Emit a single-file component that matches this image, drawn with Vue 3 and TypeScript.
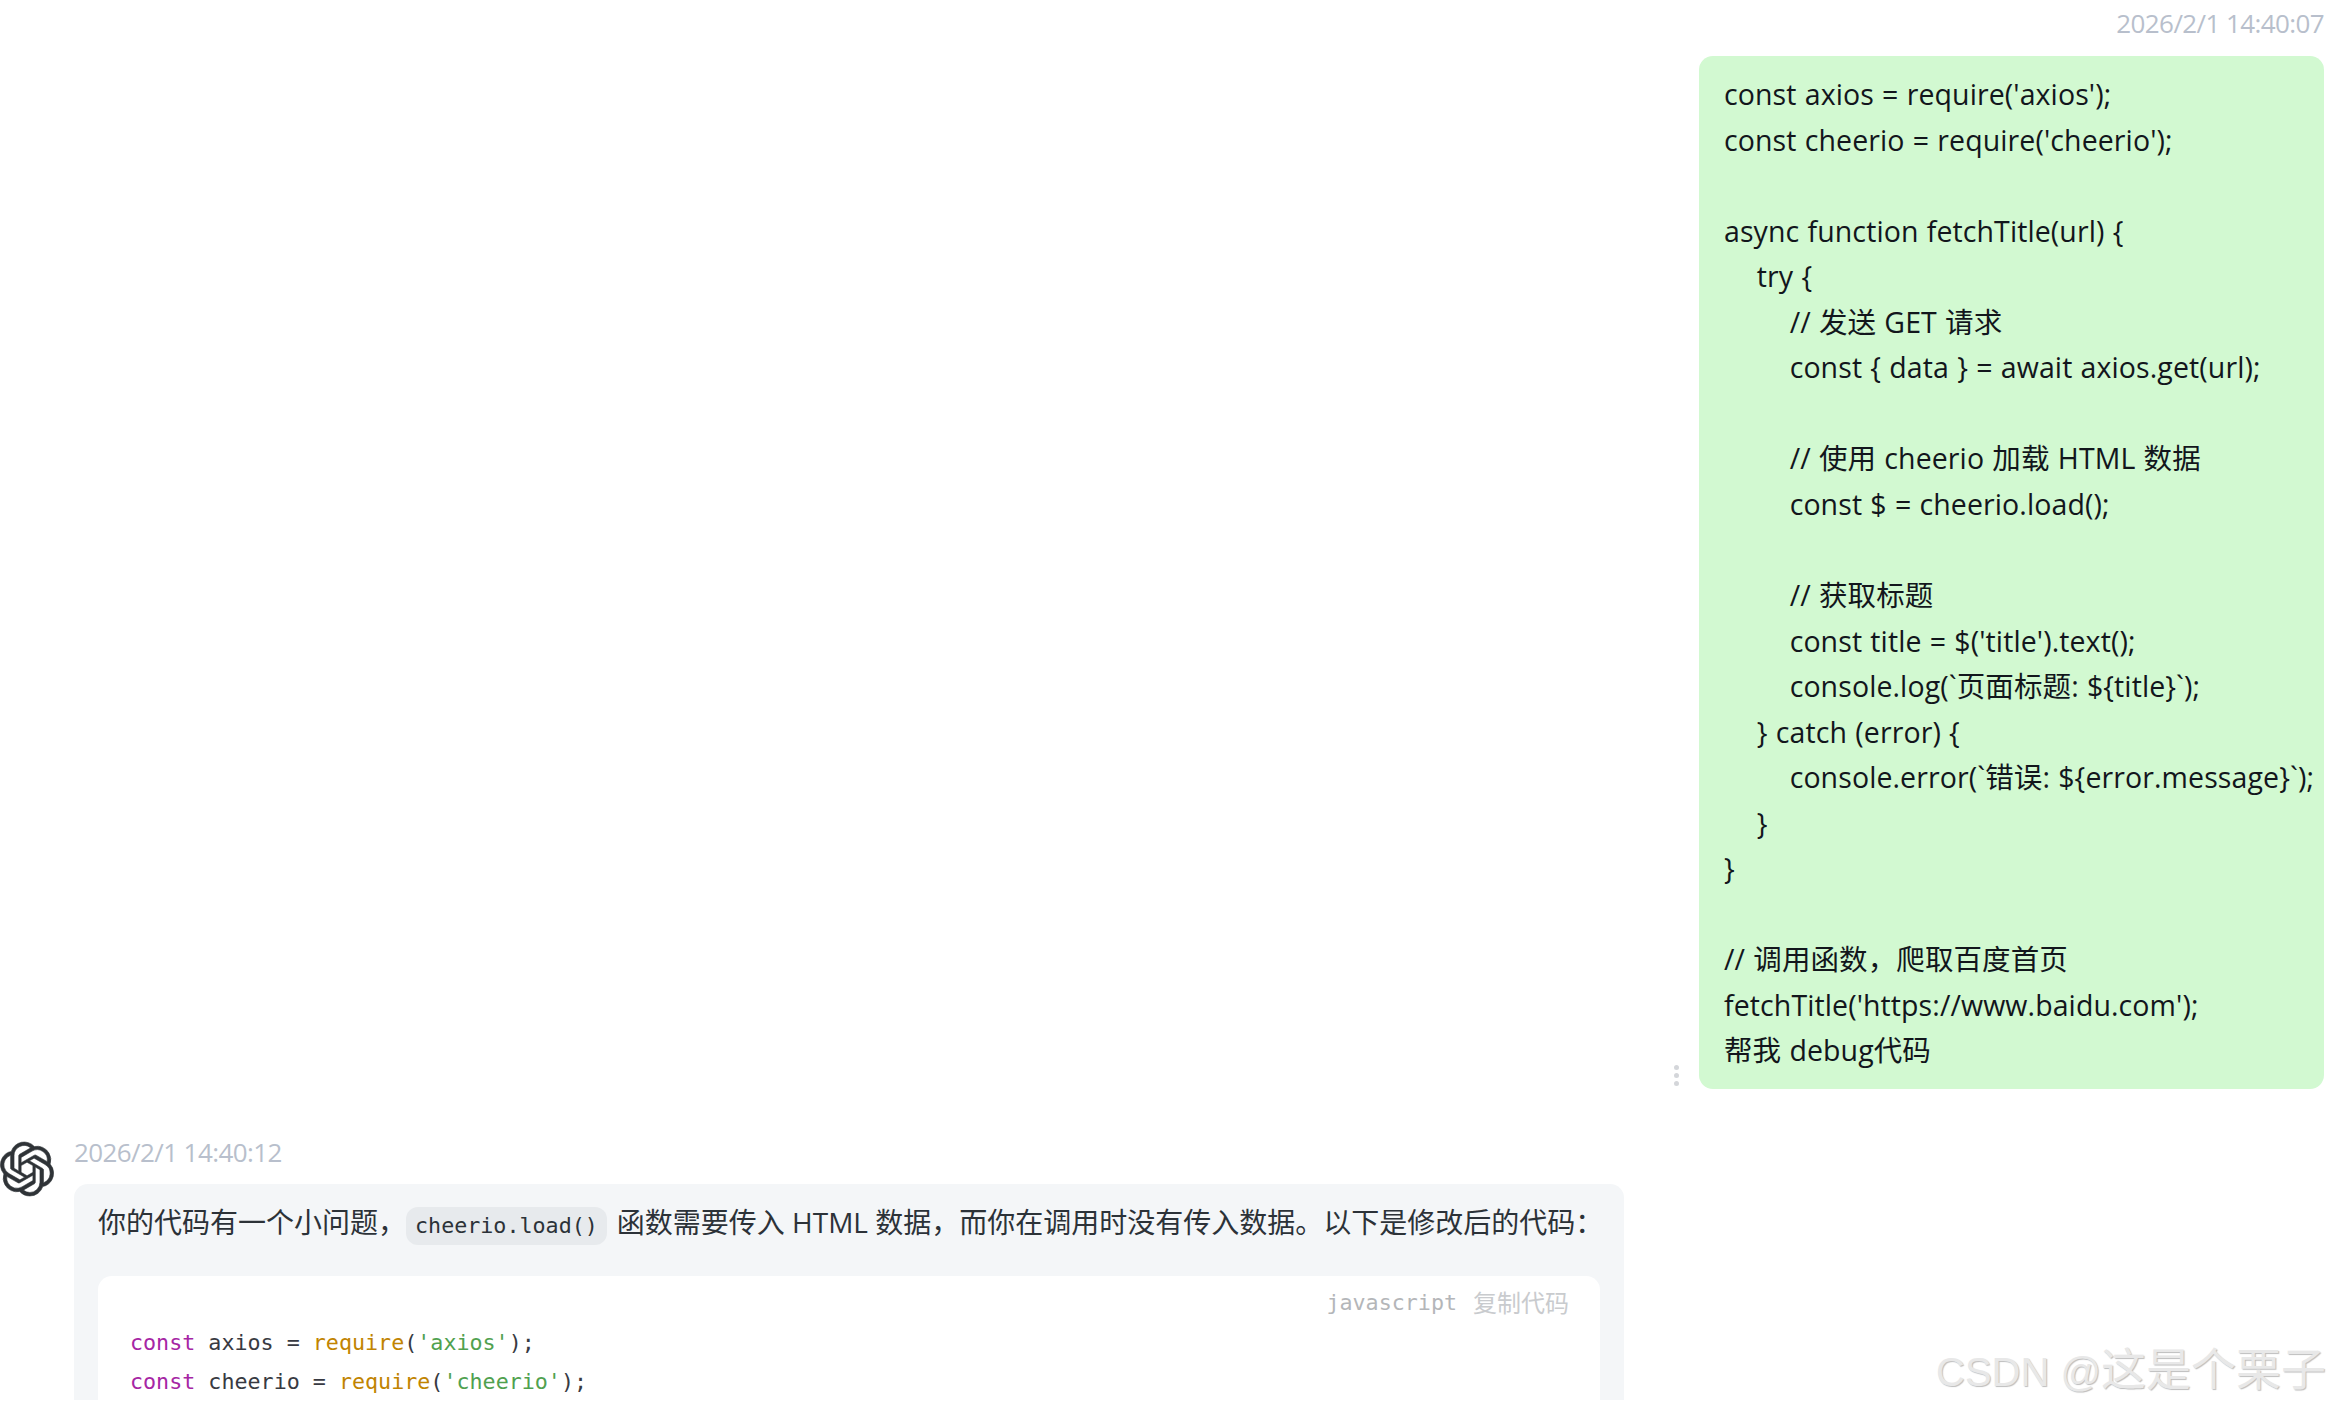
<script setup lang="ts">
const userText = `const axios = require('axios');
const cheerio = require('cheerio');

async function fetchTitle(url) {
    try {
        // 发送 GET 请求
        const { data } = await axios.get(url);

        // 使用 cheerio 加载 HTML 数据
        const $ = cheerio.load();

        // 获取标题
        const title = $('title').text();
        console.log(\`页面标题: \${title}\`);
    } catch (error) {
        console.error(\`错误: \${error.message}\`);
    }
}

// 调用函数，爬取百度首页
fetchTitle('https://www.baidu.com');
帮我 debug代码`
</script>

<template>
  <div class="page">
    <div class="stage">
      <section class="user-row">
        <div class="time user-time">2026/2/1 14:40:07</div>
        <div class="user-line">
          <div class="dots"><i></i><i></i><i></i></div>
          <div class="user-bubble">{{ userText }}</div>
        </div>
      </section>

      <section class="ai-row">
        <svg class="logo" viewBox="0 0 24 24" aria-hidden="true">
          <path fill="#2f3337" stroke="#2f3337" stroke-width="0.25" d="M22.2819 9.8211a5.9847 5.9847 0 0 0-.5157-4.9108 6.0462 6.0462 0 0 0-6.5098-2.9A6.0651 6.0651 0 0 0 4.9807 4.1818a5.9847 5.9847 0 0 0-3.9977 2.9 6.0462 6.0462 0 0 0 .7427 7.0966 5.98 5.98 0 0 0 .511 4.9107 6.051 6.051 0 0 0 6.5146 2.9001A5.9847 5.9847 0 0 0 13.2599 24a6.0557 6.0557 0 0 0 5.7718-4.2058 5.9894 5.9894 0 0 0 3.9977-2.9001 6.0557 6.0557 0 0 0-.7475-7.0729zm-9.022 12.6081a4.4755 4.4755 0 0 1-2.8764-1.0408l.1419-.0804 4.7783-2.7582a.7948.7948 0 0 0 .3927-.6813v-6.7369l2.02 1.1686a.071.071 0 0 1 .038.052v5.5826a4.504 4.504 0 0 1-4.4945 4.4944zm-9.6607-4.1254a4.4708 4.4708 0 0 1-.5346-3.0137l.142.0852 4.783 2.7582a.7712.7712 0 0 0 .7806 0l5.8428-3.3685v2.3324a.0804.0804 0 0 1-.0332.0615L9.74 19.9502a4.4992 4.4992 0 0 1-6.1408-1.6464zM2.3408 7.8956a4.485 4.485 0 0 1 2.3655-1.9728V11.6a.7664.7664 0 0 0 .3879.6765l5.8144 3.3543-2.0201 1.1685a.0757.0757 0 0 1-.071 0l-4.8303-2.7865A4.504 4.504 0 0 1 2.3408 7.872zm16.5963 3.8558L13.1038 8.364 15.1192 7.2a.0757.0757 0 0 1 .071 0l4.8303 2.7913a4.4944 4.4944 0 0 1-.6765 8.1042v-5.6772a.79.79 0 0 0-.407-.667zm2.0107-3.0231l-.142-.0852-4.7735-2.7818a.7759.7759 0 0 0-.7854 0L9.409 9.2297V6.8974a.0662.0662 0 0 1 .0284-.0615l4.8303-2.7866a4.4992 4.4992 0 0 1 6.6802 4.66zM8.3065 12.863l-2.02-1.1638a.0804.0804 0 0 1-.038-.0567V6.0742a4.4992 4.4992 0 0 1 7.3757-3.4537l-.142.0805L8.704 5.459a.7948.7948 0 0 0-.3927.6813zm1.0976-2.3654l2.602-1.4998 2.6069 1.4998v2.9994l-2.5974 1.4997-2.6067-1.4997Z"/>
        </svg>
        <div class="ai-main">
          <div class="time">2026/2/1 14:40:12</div>
          <div class="ai-bubble">
            <p class="intro">你的代码有一个小问题，<code class="inline-code">cheerio.load()</code>函数需要传入 HTML 数据，而你在调用时没有传入数据。以下是修改后的代码：</p>
            <div class="code-card">
              <div class="code-head"><span class="lang">javascript</span><span class="copy">复制代码</span></div>
              <pre class="code"><span class="kw">const</span> axios = <span class="fn">require</span>(<span class="str">'axios'</span>);
<span class="kw">const</span> cheerio = <span class="fn">require</span>(<span class="str">'cheerio'</span>);</pre>
            </div>
          </div>
        </div>
      </section>
    </div>

    <div class="watermark"><span class="wm-latin">CSDN @</span><span class="wm-cjk">这是个栗子</span></div>
  </div>
</template>

<style>
html, body { margin: 0; background: #fff; overflow: hidden; }
</style>

<style scoped>
.page {
  position: relative;
  width: 2336px;
  height: 1412px;
  overflow: hidden;
  background: #fff;
  font-family: "Open Sans", "Noto Sans CJK SC", sans-serif;
  color: #1f2329;
}
.stage {
  height: 1400px;
  overflow: hidden;
}
.time {
  font-size: 26px;
  line-height: 36px;
  letter-spacing: -0.6px;
  color: #b8bfcc;
}
.user-row {
  display: flex;
  flex-direction: column;
  align-items: flex-end;
  padding: 5px 12px 0 0;
}
.user-time { margin-bottom: 15px; }
.user-line {
  display: flex;
  align-items: flex-end;
  gap: 20px;
}
.dots {
  display: flex;
  flex-direction: column;
  gap: 3px;
  margin-bottom: 3px;
}
.dots i {
  display: block;
  width: 5px;
  height: 5px;
  border-radius: 50%;
  background: #d4d6da;
}
.user-bubble {
  width: 625px;
  box-sizing: border-box;
  padding: 16px 24px 15px 25px;
  background: #d2f9d1;
  border-radius: 14px;
  font-size: 28.5px;
  line-height: 45.55px;
  letter-spacing: 0.1px;
  word-spacing: 0.7px;
  white-space: pre;
  color: #12161c;
}
.ai-row {
  display: flex;
  gap: 20px;
  margin-top: 45px;
}
.logo {
  width: 54px;
  height: 56px;
  margin-top: 7px;
  flex: none;
}
.ai-main { width: 1550px; }
.ai-main .time { margin-bottom: 14px; }
.ai-bubble {
  background: #f4f6f8;
  border-radius: 14px 14px 0 0;
  padding: 18px 24px 0;
  height: 300px;
}
.intro {
  margin: 0;
  font-size: 28px;
  line-height: 40px;
  color: #2c3238;
  white-space: nowrap;
}
.inline-code {
  font-family: "DejaVu Sans Mono", monospace;
  font-size: 21.7px;
  line-height: 38px;
  display: inline-block;
  padding: 0 9px;
  margin: 0 10px 0 0;
  background: #e7eaed;
  border-radius: 12px;
  vertical-align: 0;
}
.code-card {
  margin-top: 31px;
  background: #fff;
  border-radius: 14px;
  padding: 9px 32px 0;
  height: 300px;
}
.code-head {
  display: flex;
  justify-content: flex-end;
  align-items: center;
  gap: 16px;
  margin-right: -1px;
  height: 36px;
  line-height: 36px;
}
.lang {
  font-family: "DejaVu Sans Mono", monospace;
  font-size: 21.7px;
  color: #b4b6b9;
}
.copy {
  font-size: 24px;
  color: #c9cbce;
}
.code {
  margin: 2px 0 0;
  font-family: "DejaVu Sans Mono", monospace;
  font-size: 21.7px;
  line-height: 39px;
  color: #383a42;
}
.kw { color: #a626a4; }
.fn { color: #c18401; }
.str { color: #50a14f; }
.watermark {
  position: absolute;
  left: 1936px;
  top: 1344px;
  font-family: "Liberation Sans", "Noto Sans CJK SC", sans-serif;
  line-height: 54px;
  white-space: nowrap;
  color: #e8e8e8;
  text-shadow: 1px 1px 1px #bdbdbd;
}
.wm-latin { font-size: 40px; }
.wm-cjk { font-size: 45px; }
</style>
